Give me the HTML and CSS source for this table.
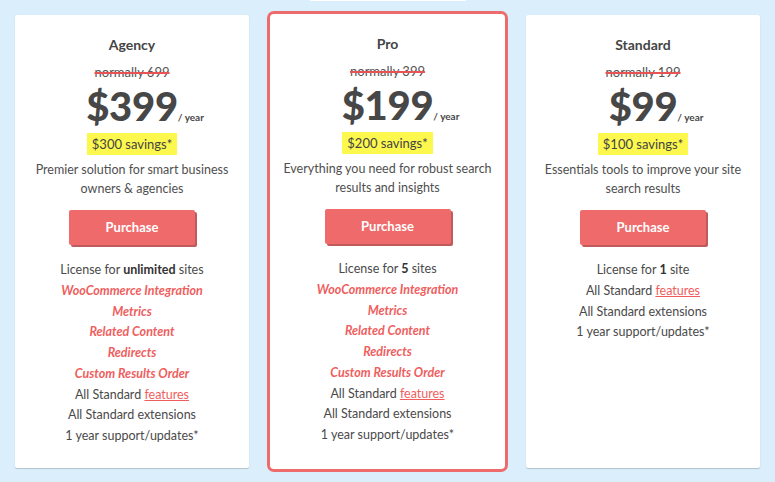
FILE: index.html
```html
<!DOCTYPE html>
<html>
<head>
<meta charset="utf-8">
<link rel="stylesheet" href="styles.css">
</head>
<body>
<div class="page">
  <div class="topstrip"></div>
  <div class="cards">
    <div class="card">
      <div class="title">Agency</div>
      <div class="normally">normally 699</div>
      <div class="price"><span class="amount">$399</span><span class="per">/ year</span></div>
      <div class="savings-row"><span class="savings">$300 savings*</span></div>
      <p class="desc">Premier solution for smart business<br>owners &amp; agencies</p>
      <div class="btn-row"><a class="btn">Purchase</a></div>
      <ul class="features">
        <li>License for <b>unlimited</b> sites</li>
        <li class="hl">WooCommerce Integration</li>
        <li class="hl">Metrics</li>
        <li class="hl">Related Content</li>
        <li class="hl">Redirects</li>
        <li class="hl">Custom Results Order</li>
        <li>All Standard <a class="link">features</a></li>
        <li>All Standard extensions</li>
        <li>1 year support/updates*</li>
      </ul>
    </div>
    <div class="card featured">
      <div class="title">Pro</div>
      <div class="normally">normally 399</div>
      <div class="price"><span class="amount">$199</span><span class="per">/ year</span></div>
      <div class="savings-row"><span class="savings">$200 savings*</span></div>
      <p class="desc">Everything you need for robust search<br>results and insights</p>
      <div class="btn-row"><a class="btn">Purchase</a></div>
      <ul class="features">
        <li>License for <b>5</b> sites</li>
        <li class="hl">WooCommerce Integration</li>
        <li class="hl">Metrics</li>
        <li class="hl">Related Content</li>
        <li class="hl">Redirects</li>
        <li class="hl">Custom Results Order</li>
        <li>All Standard <a class="link">features</a></li>
        <li>All Standard extensions</li>
        <li>1 year support/updates*</li>
      </ul>
    </div>
    <div class="card">
      <div class="title">Standard</div>
      <div class="normally">normally 199</div>
      <div class="price"><span class="amount">$99</span><span class="per">/ year</span></div>
      <div class="savings-row"><span class="savings">$100 savings*</span></div>
      <p class="desc">Essentials tools to improve your site<br>search results</p>
      <div class="btn-row"><a class="btn">Purchase</a></div>
      <ul class="features">
        <li>License for <b>1</b> site</li>
        <li>All Standard <a class="link">features</a></li>
        <li>All Standard extensions</li>
        <li>1 year support/updates*</li>
      </ul>
    </div>
  </div>
</div>
</body>
</html>
```
FILE: styles.css
```css
* { box-sizing: border-box; }
html, body { margin: 0; padding: 0; }
body {
  background: #dbeefb;
  font-family: Lato, "Open Sans", sans-serif;
  color: #4a4a4a;
  width: 775px;
  height: 482px;
  overflow: hidden;
}
.page {
  display: flex;
  flex-direction: column;
  align-items: center;
}
.topstrip {
  width: 156px;
  height: 1px;
  background: #ffffff;
}
.cards {
  width: 775px;
  padding: 0 15px;
  margin-top: 10px;
  display: flex;
  justify-content: space-between;
  align-items: center;
}
.card {
  width: 234px;
  height: 453px;
  background: #fff;
  border-radius: 2px;
  box-shadow: 0 1px 1px rgba(0,0,0,0.18), 0 0 1px rgba(0,0,0,0.08);
  text-align: center;
  padding-top: 21px;
}
.card.featured {
  width: 241px;
  height: 461px;
  border: 3.5px solid #ee6b6b;
  border-radius: 7px;
  box-shadow: none;
  padding-top: 21px;
}
.title {
  font-size: 14px;
  font-weight: 700;
  line-height: 18px;
  color: #454545;
}
.normally {
  margin-top: 9px;
  font-size: 13px;
  line-height: 18px;
  color: #555;
  text-decoration: line-through;
  text-decoration-color: #e85454;
  text-decoration-thickness: 1.5px;
}
.price {
  margin-top: 3px;
  height: 44px;
  line-height: 44px;
  color: #474747;
  white-space: nowrap;
}
.amount {
  font-size: 40px;
  font-weight: 900;
  letter-spacing: -0.3px;
}
.per {
  display: inline-block;
  width: 26px;
  margin-right: -26px;
  text-align: left;
  font-size: 10px;
  font-weight: 700;
  line-height: 10px;
  white-space: nowrap;
}
.savings-row {
  margin-top: 5px;
}
.savings {
  display: inline-block;
  background: #fdf84e;
  font-size: 13px;
  line-height: 22px;
  padding: 0 5px;
  color: #444;
}
.desc {
  margin: 5px 0 0;
  font-size: 12.5px;
  line-height: 19px;
  color: #4f4f4f;
}
.btn-row {
  margin-top: 12px;
  height: 37px;
}
.btn {
  display: inline-block;
  width: 126px;
  height: 35px;
  line-height: 35px;
  background: #ef6a6a;
  color: #fff;
  font-size: 13px;
  font-weight: 700;
  border-radius: 2px;
  box-shadow: 2px 2px 0 #c05b5b;
}
.features {
  list-style: none;
  margin: 13px 0 0;
  padding: 0;
  font-size: 12.5px;
  line-height: 20.75px;
  color: #4a4a4a;
}
.features b { color: #333; }
.features .hl {
  color: #ef5e5e;
  font-style: italic;
  font-weight: 700;
}
.link {
  color: #ef5e5e;
  text-decoration: underline;
}
```
